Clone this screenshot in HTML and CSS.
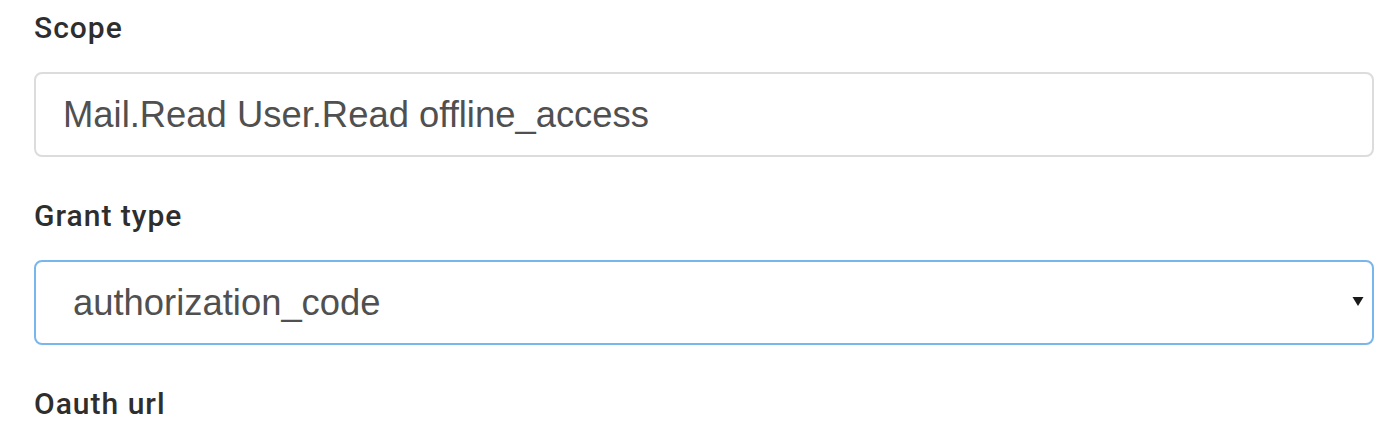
FILE: index.html
```html
<!DOCTYPE html>
<html>
<head>
<meta charset="utf-8">
<link rel="stylesheet" href="styles.css">
</head>
<body>
<form class="form">
  <div class="group">
    <label class="label" for="scope">Scope</label>
    <input class="control" id="scope" type="text" value="Mail.Read User.Read offline_access">
  </div>
  <div class="group">
    <label class="label" for="grant">Grant type</label>
    <div class="select-wrap">
      <select class="control select" id="grant">
        <option>authorization_code</option>
      </select>
      <svg class="caret" width="12" height="11" viewBox="0 0 12 11"><path d="M0.5 1 L11.5 1 L6 10 Z" fill="#1a1a1a"/></svg>
    </div>
  </div>
  <div class="group last">
    <label class="label" for="url">Oauth url</label>
  </div>
</form>
</body>
</html>
```
FILE: styles.css
```css
html, body {
  margin: 0;
  padding: 0;
  background: #fff;
}
.form {
  padding: 0 26px 0 34px;
}
.group {
  margin-bottom: 39px;
}
.group:first-child {
  padding-top: 8px;
}
.group.last {
  margin-bottom: 0;
}
.label {
  display: block;
  font-family: Roboto, "Liberation Sans", sans-serif;
  font-weight: 500;
  font-size: 30px;
  line-height: 40px;
  color: #2e2e2e;
  margin-bottom: 24px;
  letter-spacing: 1px;
}
.group.last .label {
  margin-bottom: 0;
}
.control {
  display: block;
  box-sizing: border-box;
  width: 100%;
  height: 85px;
  margin: 0;
  padding: 0 27px;
  border: 2px solid #dcdcdc;
  border-radius: 8px;
  background: #fff;
  font-family: "Liberation Sans", Arial, sans-serif;
  font-size: 36.4px;
  color: #505050;
  outline: none;
}
.select-wrap {
  position: relative;
}
.select {
  -webkit-appearance: none;
  appearance: none;
  padding-left: 37px;
  border-color: #79b6ec;
}
.caret {
  position: absolute;
  right: 10px;
  top: 36px;
}
```
